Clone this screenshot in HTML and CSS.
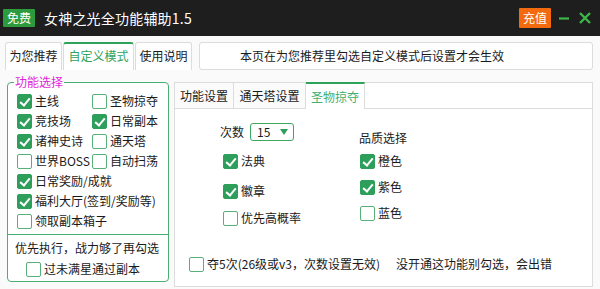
FILE: index.html
```html
<!DOCTYPE html>
<html lang="zh">
<head>
  <meta charset="UTF-8">
  <title>女神之光全功能辅助1.5</title>
  <link rel="stylesheet" href="styles.css">
</head>
<body>
  <div class="titlebar">
    <span class="badge free">免费</span>
    <span class="title">女神之光全功能辅助1.5</span>
    <span class="badge pay">充值</span>
    <svg class="win-btn" width="12" height="12" viewBox="0 0 12 12"><path d="M1 6.5h10" stroke="#3cb54a" stroke-width="2.2"/></svg>
    <svg class="win-btn" width="14" height="14" viewBox="0 0 14 14"><path d="M2 2l10 10M12 2L2 12" stroke="#3cb54a" stroke-width="2.4"/></svg>
  </div>

  <div class="top-row">
    <div class="tabs">
      <div class="tab">为您推荐</div>
      <div class="tab active">自定义模式</div>
      <div class="tab">使用说明</div>
    </div>
    <div class="notice">本页在为您推荐里勾选自定义模式后设置才会生效</div>
  </div>

  <div class="main">
    <fieldset class="func">
      <legend>功能选择</legend>
      <div class="func-grid">
        <label class="chk"><span class="cb on"></span>主线</label>
        <label class="chk"><span class="cb"></span>圣物掠夺</label>
        <label class="chk"><span class="cb on"></span>竞技场</label>
        <label class="chk"><span class="cb on"></span>日常副本</label>
        <label class="chk"><span class="cb on"></span>诸神史诗</label>
        <label class="chk"><span class="cb"></span>通天塔</label>
        <label class="chk"><span class="cb"></span>世界BOSS</label>
        <label class="chk"><span class="cb"></span>自动扫荡</label>
        <label class="chk wide"><span class="cb on"></span>日常奖励/成就</label>
        <label class="chk wide"><span class="cb on"></span>福利大厅(签到/奖励等)</label>
        <label class="chk wide"><span class="cb"></span>领取副本箱子</label>
      </div>
      <div class="func-extra">
        <div class="hint">优先执行，战力够了再勾选</div>
        <label class="chk"><span class="cb"></span>过未满星通过副本</label>
      </div>
    </fieldset>

    <div class="panel">
      <div class="subtabs">
        <div class="subtab">功能设置</div>
        <div class="subtab">通天塔设置</div>
        <div class="subtab active">圣物掠夺</div>
        <div class="subtab-fill"></div>
      </div>
      <div class="panel-body">
        <div class="cols">
          <div class="col col-left">
            <div class="count-row">
              <span>次数</span>
              <div class="select"><span>15</span><span class="arrow"></span></div>
            </div>
            <label class="chk r1"><span class="cb on"></span>法典</label>
            <label class="chk r2"><span class="cb on"></span>徽章</label>
            <label class="chk r3"><span class="cb"></span>优先高概率</label>
          </div>
          <div class="col col-right">
            <div class="quality-title">品质选择</div>
            <label class="chk q1"><span class="cb on"></span>橙色</label>
            <label class="chk q2"><span class="cb on"></span>紫色</label>
            <label class="chk q2"><span class="cb"></span>蓝色</label>
          </div>
        </div>
        <div class="bottom-row">
          <label class="chk"><span class="cb"></span>夺5次(26级或v3，次数设置无效)</label>
          <span class="warn">没开通这功能别勾选，会出错</span>
        </div>
      </div>
    </div>
  </div>
</body>
</html>
```

FILE: styles.css
```css
body {
  margin: 0;
  width: 600px;
  height: 289px;
  overflow: hidden;
  background-color: #fafafa;
  font-family: "Noto Sans CJK SC", "Microsoft YaHei", sans-serif;
  font-size: 12px;
  line-height: 16px;
  color: #1a1a1a;
}

/* title bar */
.titlebar {
  display: flex;
  align-items: center;
  height: 36px;
  padding: 0 8px 0 3px;
  background-color: #1e1e1e;
  box-sizing: border-box;
}

.badge {
  color: #ffffff;
  font-size: 12px;
  line-height: 18px;
  padding: 0 4px;
  border-radius: 1px;
  white-space: nowrap;
}

.badge.free {
  background-color: #2b9b3e;
}

.badge.pay {
  background-color: #f2690e;
  margin-left: auto;
  line-height: 20px;
}

.title {
  color: #ffffff;
  font-size: 14px;
  margin-left: 9px;
  letter-spacing: 0.2px;
}

.win-btn {
  margin-left: 7px;
}

.win-btn:last-child {
  margin-left: 8px;
}

/* top tabs */
.top-row {
  display: flex;
  align-items: flex-end;
  height: 34px;
  padding: 0 7px 0 5px;
}

.tabs {
  display: flex;
  height: 28px;
}

.tab {
  box-sizing: border-box;
  height: 28px;
  padding-top: 5px;
  text-align: center;
  white-space: nowrap;
  background-color: #ffffff;
  border: 1px solid #dcdcdc;
  border-bottom: none;
  border-radius: 3px 3px 0 0;
  margin-right: 1px;
  width: 57px;
}

.tab.active {
  color: #2fa35a;
  border-top: 2px solid #2fa35a;
  padding-top: 4px;
  width: 71px;
}

.notice {
  box-sizing: border-box;
  flex: 1;
  height: 28px;
  margin-left: 6px;
  padding: 5px 0 0 40px;
  white-space: nowrap;
  background-color: #ffffff;
  border: 1px solid #dcdcdc;
  border-radius: 3px;
}

/* main area */
.main {
  display: flex;
  padding: 4px 7px 0 7px;
}

/* checkboxes */
.chk {
  display: flex;
  align-items: center;
  height: 16px;
  white-space: nowrap;
}

.cb {
  position: relative;
  box-sizing: border-box;
  width: 15px;
  height: 15px;
  margin-right: 3px;
  border: 1px solid #57b07a;
  border-radius: 2px;
  background-color: #ffffff;
  flex: none;
}

.cb.on {
  background-color: #2e9e5b;
  border-color: #2e9e5b;
}

.cb.on::after {
  content: "";
  position: absolute;
  left: 4px;
  top: 1px;
  width: 4px;
  height: 8px;
  border: solid #ffffff;
  border-width: 0 2px 2px 0;
  transform: rotate(40deg);
}

/* left group */
.func {
  box-sizing: border-box;
  width: 162px;
  height: 208px;
  margin: 0;
  padding: 3px 0 0;
  border: 1px solid #4aae70;
  border-radius: 4px;
  background-color: #ffffff;
}

.func legend {
  color: #e01fd8;
  line-height: 16px;
  padding: 0 1px;
  margin-left: 6px;
}

.func-grid {
  display: grid;
  grid-template-columns: 75px 1fr;
  grid-auto-rows: 20px;
  padding-left: 9px;
}

.func-grid .wide {
  grid-column: span 2;
}

.func-extra {
  margin-top: 1px;
  border-top: 1px solid #4aae70;
  padding: 5px 0 0 7px;
}

.hint {
  line-height: 16px;
  white-space: nowrap;
}

.func-extra .chk {
  margin: 5px 0 0 11px;
}

/* right panel */
.panel {
  box-sizing: border-box;
  flex: 1;
  height: 205px;
  margin: 8px 0 0 5px;
  border: 1px solid #dcdcdc;
  background-color: #ffffff;
}

.subtabs {
  display: flex;
  height: 26px;
}

.subtab {
  box-sizing: border-box;
  height: 26px;
  padding-top: 5px;
  text-align: center;
  white-space: nowrap;
  border-right: 1px solid #dcdcdc;
  border-bottom: 1px solid #dcdcdc;
  background-color: #fbfbfb;
  width: 59px;
}

.subtab:nth-child(2) {
  width: 72px;
}

.subtab.active {
  color: #45b070;
  background-color: #ffffff;
  border-bottom: none;
  border-top: 2px solid #2fa35a;
  margin-top: -1px;
  height: 27px;
  padding-top: 5px;
}

.subtab-fill {
  flex: 1;
  border-bottom: 1px solid #dcdcdc;
}

.panel-body {
  padding: 0 0 0 14px;
}

.cols {
  display: flex;
  padding-left: 31px;
}

.col {
  display: flex;
  flex-direction: column;
}

.col-left {
  width: 139px;
  padding-top: 14px;
}

.count-row {
  display: flex;
  align-items: center;
  height: 18px;
}

.select {
  display: flex;
  align-items: center;
  justify-content: space-between;
  box-sizing: border-box;
  width: 44px;
  height: 18px;
  margin-left: 6px;
  padding: 0 5px 0 6px;
  border: 1px solid #3aa860;
  border-radius: 3px;
}

.arrow {
  width: 0;
  height: 0;
  border-left: 4px solid transparent;
  border-right: 4px solid transparent;
  border-top: 6px solid #2e9e5b;
}

.col-left .chk {
  margin-left: 3px;
}

.r1 {
  margin-top: 12px;
}

.r2 {
  margin-top: 14px;
}

.r3 {
  margin-top: 11px;
}

.col-right {
  padding-top: 21px;
}

.quality-title {
  line-height: 16px;
}

.col-right .chk {
  margin-left: 1px;
}

.q1 {
  margin-top: 7px;
}

.q2 {
  margin-top: 10px;
}

.bottom-row {
  display: flex;
  align-items: center;
  margin-top: 30px;
}

.warn {
  margin-left: 16px;
}
```
